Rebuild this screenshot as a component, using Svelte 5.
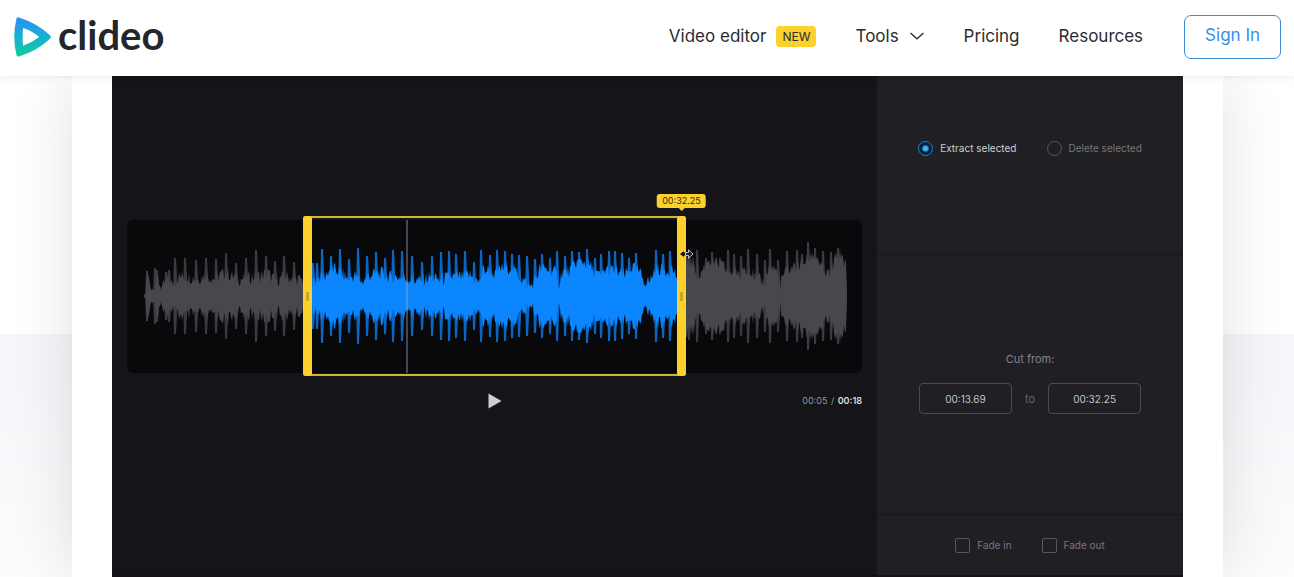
<script lang="ts">
    type Point = [number, number];

    const TRACK_WIDTH = 735;
    const TRACK_HEIGHT = 153;
    const MIDDLE = 76;

    // share of the track, in percent
    const selection = { from: 23.95, to: 76.05 };
    const playhead = 38;

    let mode = $state("extract");
    let cutFrom = $state("00:13.69");
    let cutTo = $state("00:32.25");
    let fadeIn = $state(false);
    let fadeOut = $state(false);

    // loudness of the clip: x on the track, half height of the wave
    const body: Point[] = [
        [17, 1], [19, 3], [20, 24], [23, 14], [26, 8], [29, 19], [32, 14], [36, 9],
        [41, 18], [45, 12], [51, 20], [59, 21], [63, 20], [71, 18], [78, 22],
        [88, 18], [98, 25], [103, 22], [113, 18], [123, 20], [133, 21], [141, 24],
        [148, 16], [158, 21], [168, 18], [176, 17], [186, 14], [191, 20], [198, 21],
        [204, 29], [213, 25], [221, 18], [228, 22], [235, 15], [243, 22], [253, 24],
        [263, 20], [273, 20], [283, 18], [293, 16], [303, 20], [313, 17], [323, 20],
        [333, 20], [343, 22], [352, 14], [356, 27], [363, 27], [368, 22], [373, 28],
        [383, 30], [388, 26], [395, 18], [403, 10], [408, 17], [413, 28], [420, 28],
        [428, 25], [432, 13], [435, 25], [443, 26], [448, 34], [455, 36], [461, 33],
        [468, 25], [473, 20], [479, 28], [488, 26], [498, 22], [505, 30], [511, 26],
        [518, 16], [523, 16], [528, 28], [535, 28], [541, 26], [545, 29], [550, 20],
        [554, 34], [559, 36], [567, 34], [571, 18], [576, 28], [581, 38], [589, 33],
        [597, 30], [603, 23], [609, 28], [613, 15], [615, 28], [621, 30], [629, 18],
        [638, 15], [641, 30], [648, 28], [652, 20], [653, 4], [655, 20], [660, 26],
        [665, 30], [673, 32], [680, 37], [685, 43], [691, 38], [697, 24], [703, 23],
        [709, 40], [715, 43], [719, 30], [720, 3],
    ];

    const beats: Point[] = [
        [20, 25], [28, 28], [30, 26], [39, 24], [42, 26], [48, 38], [58, 38], [69, 36],
        [79, 38], [89, 37], [99, 43], [109, 33], [119, 38], [129, 46], [139, 40],
        [148, 35], [157, 40], [167, 34], [186, 33], [190, 33], [195, 47], [204, 40],
        [213, 47], [222, 37], [231, 48], [240, 40], [249, 44], [258, 38], [266, 46],
        [275, 45], [285, 40], [295, 34], [305, 40], [314, 44], [322, 45], [329, 42],
        [338, 45], [347, 34], [354, 46], [363, 41], [370, 46], [378, 45], [385, 42],
        [392, 41], [400, 40], [408, 37], [415, 42], [423, 38], [430, 45], [438, 40],
        [445, 45], [452, 44], [460, 47], [468, 38], [474, 42], [482, 45], [488, 45],
        [495, 43], [502, 38], [509, 43], [529, 46], [536, 42], [543, 45], [562, 44],
        [570, 46], [579, 38], [585, 44], [593, 38], [601, 46], [607, 42], [614, 40],
        [621, 47], [630, 42], [638, 36], [643, 47], [651, 36], [660, 45], [670, 46],
        [675, 42], [681, 54], [688, 48], [696, 45], [704, 44], [711, 48],
    ];

    // small ragged edge, the same on every render
    const jitter = (x: number) => {
        const n = Math.sin(x * 12.9898) * 43758.5453;
        return (n - Math.floor(n)) * 14 - 8;
    };

    function drawBody() {
        const top: string[] = [];
        const bottom: string[] = [];
        let i = 0;
        for (let x = body[0][0]; x <= 720; x++) {
            while (i < body.length - 2 && body[i + 1][0] < x) i++;
            const [x1, y1] = body[i];
            const [x2, y2] = body[i + 1];
            const level = y1 + ((y2 - y1) * (x - x1)) / (x2 - x1);
            const h = Math.max(1, level < 8 ? level : level + jitter(x));
            top.push(`${x} ${(MIDDLE - h).toFixed(1)}`);
            bottom.unshift(`${x} ${(MIDDLE + h).toFixed(1)}`);
        }
        return `M${top.join("L")}L${bottom.join("L")}Z`;
    }

    const drawBeats = () =>
        beats
            .map(([x, h]) => `M${x - 2} ${MIDDLE}L${x - 1} ${MIDDLE - h}h2L${x + 3} ${MIDDLE}L${x + 1} ${MIDDLE + h}h-2Z`)
            .join("");

    const bodyPath = drawBody();
    const beatsPath = drawBeats();
</script>

<div class="page">
    <header>
        <a class="logo" href="/" aria-label="clideo">
            <svg width="38" height="40" viewBox="0 0 38 40" aria-hidden="true">
                <defs>
                    <linearGradient id="brand" x1="0" y1="0" x2="0" y2="1">
                        <stop offset="0.1" stop-color="#2896ec" />
                        <stop offset="0.55" stop-color="#17b3cd" />
                        <stop offset="1" stop-color="#12cf92" />
                    </linearGradient>
                </defs>
                <path
                    fill="url(#brand)"
                    fill-rule="evenodd"
                    d="M3.5 1.6Q4 -.2 6 .6Q24.5 6.5 37.2 18.6Q38.6 20 37.2 21.4Q24.5 33.8 6 39.4Q4 40 3.5 38.2Q-1 20 3.5 1.6ZM10 11Q9.4 20 10 28.8Q18.5 26 26.2 20Q18.5 13.3 10 11Z"
                />
            </svg>
            <span>clideo</span>
        </a>
        <nav>
            <a href="/editor">Video editor <span class="badge">NEW</span></a>
            <a href="/tools">
                Tools
                <svg width="16" height="8" viewBox="0 0 16 8" aria-hidden="true">
                    <path d="M1.5 1L8 6.8L14.5 1" fill="none" stroke="currentColor" stroke-width="1.3" />
                </svg>
            </a>
            <a href="/pricing">Pricing</a>
            <a href="/resources">Resources</a>
            <button class="sign-in" type="button">Sign In</button>
        </nav>
    </header>

    <main>
        <div class="card">
            <div class="editor">
                <section class="stage">
                    <div class="track">
                        <svg
                            class="wave"
                            viewBox="0 0 {TRACK_WIDTH} {TRACK_HEIGHT}"
                            preserveAspectRatio="none"
                            aria-hidden="true"
                        >
                            <defs>
                                <clipPath id="selected">
                                    <rect
                                        x={(TRACK_WIDTH * selection.from) / 100}
                                        width={(TRACK_WIDTH * (selection.to - selection.from)) / 100}
                                        height={TRACK_HEIGHT}
                                    />
                                </clipPath>
                            </defs>
                            <g fill="#48474b">
                                <path d={beatsPath} opacity="0.8" />
                                <path d={bodyPath} />
                            </g>
                            <g clip-path="url(#selected)">
                                <rect width={TRACK_WIDTH} height={TRACK_HEIGHT} fill="#09090c" />
                                <g fill="#0b86ff">
                                    <path d={beatsPath} opacity="0.75" />
                                    <path d={bodyPath} />
                                </g>
                            </g>
                        </svg>
                        <span class="playhead" style="left: {playhead}%"></span>
                        <div
                            class="selection"
                            style="left: {selection.from}%; right: {100 - selection.to}%"
                        >
                            <span class="handle"></span>
                            <span class="handle">
                                <span class="tooltip">{cutTo}</span>
                                <svg class="cursor" width="14" height="12" viewBox="0 0 14 12" aria-hidden="true">
                                    <path d="M0 6L4 3V9Z" fill="#15140f" />
                                    <path d="M2 6H8" stroke="#15140f" stroke-width="3" />
                                    <path
                                        d="M5.5 4.6H8.5V1.8L13 6L8.5 10.2V7.4H5.5Z"
                                        fill="#17161b"
                                        stroke="#c8c8ca"
                                    />
                                </svg>
                            </span>
                        </div>
                    </div>
                    <div class="controls">
                        <button class="play" type="button" aria-label="Play">
                            <svg width="14" height="16" viewBox="0 0 14 16" aria-hidden="true">
                                <path d="M.5.5L13.5 8L.5 15.5Z" fill="#cfcfd1" />
                            </svg>
                        </button>
                        <p class="time">00:05 <span>/</span> <strong>00:18</strong></p>
                    </div>
                </section>

                <aside>
                    <div class="options modes">
                        <label class:active={mode === "extract"}>
                            <input type="radio" name="mode" value="extract" bind:group={mode} />
                            Extract selected
                        </label>
                        <label class:active={mode === "delete"}>
                            <input type="radio" name="mode" value="delete" bind:group={mode} />
                            Delete selected
                        </label>
                    </div>
                    <div class="cut">
                        <label for="cut-from">Cut from:</label>
                        <div class="range">
                            <input id="cut-from" type="text" bind:value={cutFrom} />
                            <label for="cut-to">to</label>
                            <input id="cut-to" type="text" bind:value={cutTo} />
                        </div>
                    </div>
                    <div class="options fades">
                        <label>
                            <input type="checkbox" bind:checked={fadeIn} />
                            Fade in
                        </label>
                        <label>
                            <input type="checkbox" bind:checked={fadeOut} />
                            Fade out
                        </label>
                    </div>
                </aside>
            </div>
        </div>
    </main>
</div>

<style>
    :global(body) {
        margin: 0;
        background: #fff;
    }

    .page {
        display: flex;
        flex-direction: column;
        min-height: 100vh;
        overflow: hidden;
        font-family: Inter, "Liberation Sans", sans-serif;
    }

    .page * {
        box-sizing: border-box;
    }

    header {
        position: relative;
        z-index: 2;
        display: flex;
        align-items: center;
        justify-content: space-between;
        height: 76px;
        padding: 0 13px;
        background: #fff;
        box-shadow: 0 1px 8px rgba(0, 0, 0, 0.08);
    }

    .logo {
        display: flex;
        align-items: center;
        gap: 7px;
        padding-bottom: 2px;
        color: #25262b;
        font: bold 40px/40px Lato, sans-serif;
        text-decoration: none;
    }

    .logo span {
        padding-bottom: 4px;
    }

    nav {
        display: flex;
        align-items: center;
        gap: 39px;
        padding-bottom: 2px;
    }

    nav a {
        display: flex;
        align-items: center;
        gap: 10px;
        padding-bottom: 2px;
        color: #2b2b30;
        font-size: 17px;
        line-height: 24px;
        text-decoration: none;
    }

    nav a:nth-of-type(4) {
        margin-right: 2px;
    }

    .badge {
        padding: 0 6px;
        border-radius: 4px;
        background: #fcd02d;
        font-size: 12px;
        line-height: 21px;
    }

    .sign-in {
        height: 44px;
        padding: 0 20px 4px;
        border: 1px solid #3a8bdc;
        border-radius: 7px;
        background: #fff;
        color: #3290ec;
        font: 17px/24px Inter, sans-serif;
    }

    main {
        display: flex;
        flex: 1;
        padding: 0 71px 0 72px;
        background: linear-gradient(#fff 258px, #f5f5fa 258px, #fdfdfe 520px);
    }

    .card {
        flex: 1;
        min-width: 0;
        padding: 0 40px;
        background: #fff;
        box-shadow: 0 0 60px rgba(0, 0, 0, 0.12);
    }

    .editor {
        display: grid;
        grid-template-columns: minmax(0, 5fr) minmax(240px, 2fr);
        border-bottom: 3px solid #151015;
        background: #151419;
    }

    .stage {
        padding: 144px 15px 0;
    }

    .track {
        position: relative;
        height: 153px;
        border-radius: 6px;
        background: #09090c;
    }

    .wave {
        display: block;
        width: 100%;
        height: 100%;
    }

    .playhead {
        position: absolute;
        top: 0;
        bottom: 0;
        width: 2px;
        background: rgba(160, 170, 180, 0.4);
    }

    .selection {
        position: absolute;
        top: -4px;
        bottom: -3px;
        display: flex;
        justify-content: space-between;
        border: solid #d0b52f;
        border-width: 2px 0;
        border-radius: 3px;
    }

    .handle {
        position: relative;
        display: flex;
        align-items: center;
        justify-content: center;
        width: 9px;
        margin: -2px 0;
        border-radius: 3px;
        background: #fcd02d;
    }

    .handle::before {
        width: 3px;
        height: 9px;
        background: #c9a52c;
        content: "";
    }

    .tooltip {
        position: absolute;
        bottom: 100%;
        left: 50%;
        margin-bottom: 8px;
        padding: 0 5px;
        border-radius: 3px;
        background: #fcd02d;
        color: #332d14;
        font-size: 9px;
        line-height: 14px;
        transform: translateX(-50%);
    }

    .tooltip::after {
        position: absolute;
        top: 100%;
        left: 50%;
        margin-left: -3px;
        border: 3px solid transparent;
        border-top-color: #fcd02d;
        content: "";
    }

    .cursor {
        position: absolute;
        top: 32px;
        left: 3px;
    }

    .controls {
        display: grid;
        grid-template-columns: 1fr auto 1fr;
        align-items: center;
        padding-top: 18px;
    }

    .play {
        grid-column: 2;
        display: flex;
        padding: 2px 0;
        border: 0;
        background: none;
    }

    .time {
        margin: 0;
        color: #96969a;
        font-size: 9px;
        line-height: 20px;
        text-align: right;
    }

    .time span {
        margin: 0 1px;
    }

    .time strong {
        color: #dededf;
        font-weight: 600;
    }

    aside {
        background: #201f24;
        color: #77767b;
        font-size: 10px;
        line-height: 16px;
    }

    .options {
        display: flex;
        justify-content: center;
        gap: 30px;
    }

    .options label {
        display: flex;
        align-items: center;
        gap: 7px;
    }

    .options label.active {
        color: #d0d0d2;
    }

    .options input {
        width: 15px;
        height: 15px;
        margin: 0;
        border: 1px solid #58575c;
        border-radius: 2px;
        appearance: none;
    }

    .modes {
        padding: 64px 0 98px;
    }

    .modes input {
        border-radius: 50%;
    }

    .modes input:checked {
        border-color: #1687d8;
        background: radial-gradient(circle, #3fb4f4 2px, #061f3c 4px);
    }

    .cut {
        display: flex;
        flex-direction: column;
        align-items: center;
        gap: 16px;
        padding: 96px 0 100px;
        border: solid #17161b;
        border-width: 1px 0;
        color: #85848a;
        font-size: 11px;
    }

    .range {
        display: flex;
        align-items: center;
        gap: 13px;
        color: #66656a;
    }

    .range input {
        width: 93px;
        height: 31px;
        padding: 0;
        border: 1px solid #4c4b50;
        border-radius: 4px;
        background: none;
        color: #c4c4c7;
        font: 10px/16px Inter, sans-serif;
        text-align: center;
    }

    .fades {
        padding: 22px 0;
    }
</style>
